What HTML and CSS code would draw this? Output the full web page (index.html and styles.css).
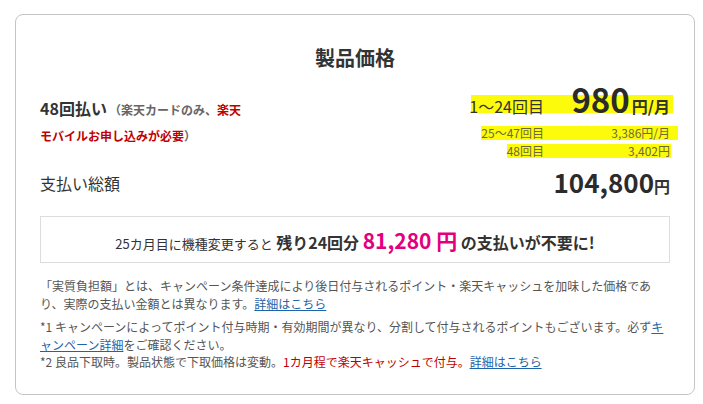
FILE: index.html
```html
<!DOCTYPE html>
<html lang="ja">
<head>
<meta charset="utf-8">
<title>製品価格</title>
<link rel="stylesheet" href="styles.css">
</head>
<body>
<div class="card">
  <h2 class="title">製品価格</h2>
  <div class="plan">
    <div class="plan-name"><span class="plan-count">48回払い</span><span class="plan-cond">（楽天カードのみ、<span class="red">楽天モバイルお申し込みが必要</span>）</span></div>
    <div class="plan-rows">
      <div class="prow prow-main"><span class="plabel">1～24回目</span><span class="pval"><b class="big">980</b><b class="unit">円/月</b></span></div>
      <div class="prow prow-sub prow-2"><span class="plabel">25～47回目</span><span class="pval">3,386円/月</span></div>
      <div class="prow prow-sub prow-3"><span class="plabel">48回目</span><span class="pval">3,402円</span></div>
    </div>
  </div>
  <div class="total">
    <span class="total-label">支払い総額</span>
    <span class="total-val"><b class="total-num">104,800</b><b class="total-unit">円</b></span>
  </div>
  <div class="promo"><span class="promo-lead">25カ月目に機種変更すると</span> <strong class="promo-em">残り24回分</strong> <strong class="promo-price">81,280 円</strong> <strong class="promo-em">の支払いが不要に!</strong></div>
  <div class="notes">
    <p>「実質負担額」とは、キャンペーン条件達成により後日付与されるポイント・楽天キャッシュを加味した価格であり、実際の支払い金額とは異なります。<a href="#">詳細はこちら</a></p>
    <p>*1 キャンペーンによってポイント付与時期・有効期間が異なり、分割して付与されるポイントもございます。必ず<a href="#">キャンペーン詳細</a>をご確認ください。<br>*2 良品下取時。製品状態で下取価格は変動。<span class="red">1カ月程で楽天キャッシュで付与。</span><a href="#">詳細はこちら</a></p>
  </div>
</div>
</body>
</html>
```
FILE: styles.css
```css
* { box-sizing: border-box; }
html, body { background: #fff; }
body {
  margin: 0;
  padding: 14px 0 0 15px;
  font-family: "Noto Sans CJK JP", "Noto Sans", sans-serif;
  color: #333;
}
.card {
  width: 680px;
  border: 1px solid #c4c4c4;
  border-radius: 8px;
  padding: 28px 24px 23px;
}
.title {
  margin: 0 0 10px;
  font-size: 20px;
  line-height: 30px;
  font-weight: 700;
  text-align: center;
  color: #333;
}
.plan {
  display: flex;
  justify-content: space-between;
  align-items: flex-start;
}
.plan-name {
  width: 210px;
  margin-top: 13px;
  line-height: 25px;
}
.plan-count {
  font-size: 16px;
  font-weight: 700;
  color: #333;
}
.plan-cond {
  margin-left: 2px;
  font-size: 12px;
  font-weight: 700;
  color: #666;
}
.red { color: #bf0000; }
.plan-rows {
  display: flex;
  flex-direction: column;
  align-items: flex-end;
}
.prow {
  display: flex;
  align-items: baseline;
}
.pval {
  width: 126px;
  text-align: right;
}
.prow-main {
  line-height: 1;
  padding-right: 3px;
  margin-right: -3px;
  margin-bottom: 9.5px;
  background: linear-gradient(#fdfb0c, #fdfb0c) 2px 12px / calc(100% - 2px) 18px no-repeat;
}
.prow-main .plabel {
  font-size: 16px;
  color: #333;
}
.big {
  font-size: 33px;
  font-weight: 700;
  color: #2b2b2b;
}
.unit {
  margin-left: 2px;
  font-size: 16px;
  font-weight: 700;
  color: #333;
}
.prow-sub {
  font-size: 12px;
  color: #6d6a35;
  background: #fdfb0c;
}
.prow-2 {
  height: 14.5px;
  line-height: 14.5px;
  padding-right: 8px;
  margin-right: -8px;
  margin-bottom: 4px;
}
.prow-3 {
  height: 14px;
  line-height: 14px;
  padding-right: 1px;
  margin-right: -1px;
}
.total {
  display: flex;
  justify-content: space-between;
  align-items: center;
  margin-top: 9.6px;
}
.total-label {
  font-size: 16px;
  line-height: 26px;
  padding-top: 2px;
  color: #333;
}
.total-val {
  line-height: 1;
}
.total-num {
  font-size: 26px;
  font-weight: 700;
  color: #2b2b2b;
}
.total-unit {
  font-size: 16px;
  font-weight: 700;
  color: #333;
}
.promo {
  margin-top: 20.4px;
  height: 47px;
  border: 1px solid #ddd;
  text-align: center;
  line-height: 47px;
  white-space: nowrap;
}
.promo-lead {
  font-size: 13px;
  color: #333;
}
.promo-em {
  font-size: 16px;
  font-weight: 700;
  color: #333;
}
.promo-price {
  font-size: 21px;
  font-weight: 700;
  color: #e3007f;
}
.notes {
  margin-top: 14.25px;
  font-size: 12px;
  line-height: 17.5px;
  color: #555;
}
.notes p { margin: 0; }
.notes p + p { margin-top: 6px; }
.notes a {
  color: #1f63a8;
  text-decoration: underline;
}
```
